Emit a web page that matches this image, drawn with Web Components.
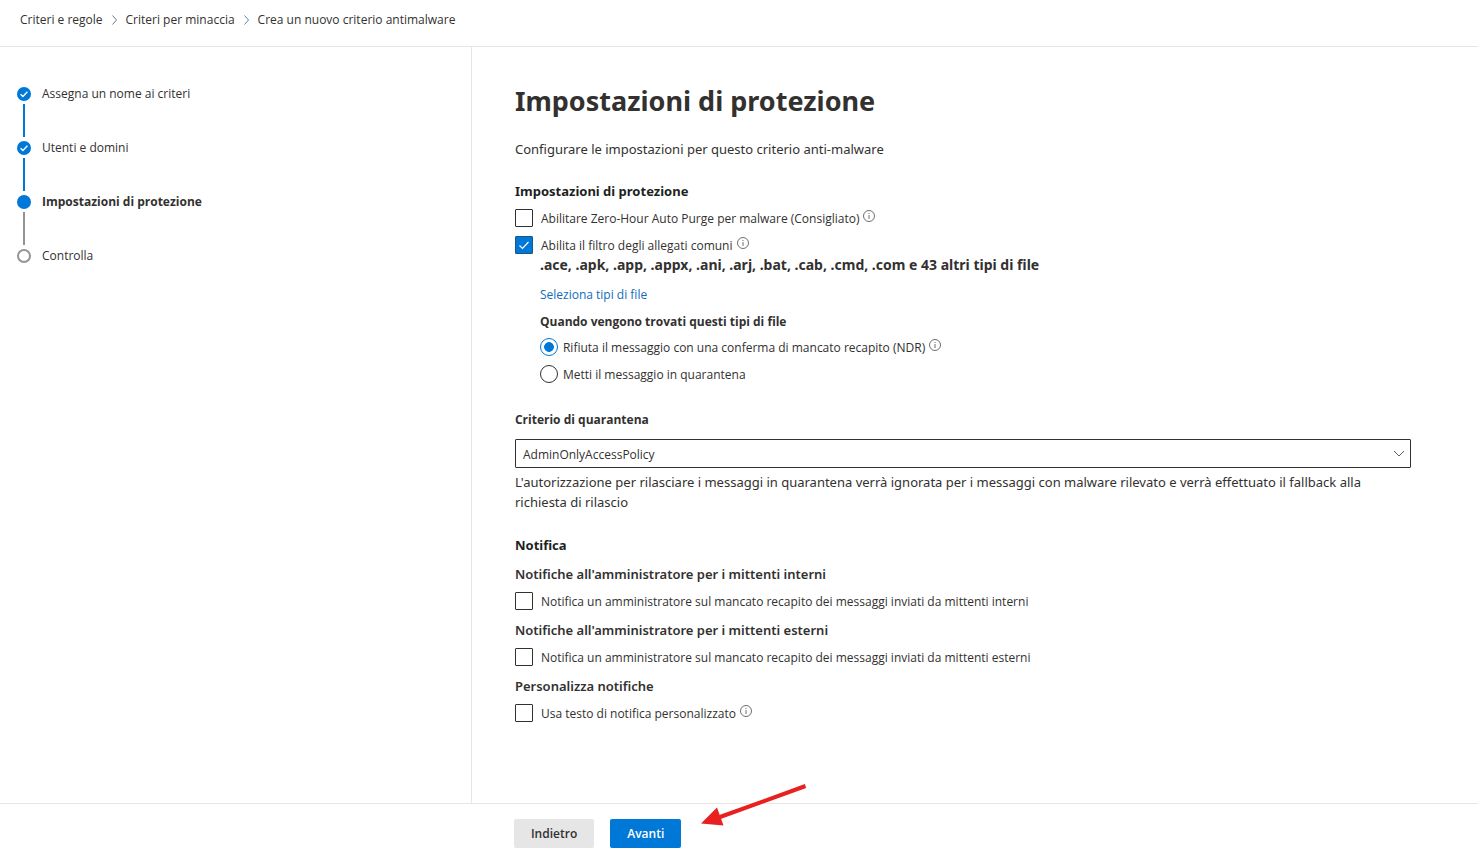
<!DOCTYPE html>
<html lang="it">
<head>
<meta charset="utf-8">
<meta name="viewport" content="width=device-width, initial-scale=1">
<title>Crea un nuovo criterio antimalware</title>
<style>
  body {
    margin: 0;
    background: #fff;
    color: #323130;
    font-family: "Segoe UI", "Open Sans", "Noto Sans", sans-serif;
    font-size: 12px;
    line-height: 20px;
    --accent: #0078d7;
    --line: #e6e6e6;
    --side: calc(32% - 1px);
    --text-m: 13px;
    --text-l: 14px;
    --wide: "Segoe UI", "Noto Sans", "Open Sans", sans-serif;
  }
</style>
</head>
<body>
<policy-wizard></policy-wizard>

<script>
  const define = (name, html, setup) => {
    const template = document.createElement('template');
    template.innerHTML = html;
    customElements.define(name, class extends HTMLElement {
      constructor() {
        super();
        this.attachShadow({ mode: 'open' }).append(template.content.cloneNode(true));
      }
      connectedCallback() {
        if (setup) setup(this, this.shadowRoot);
      }
    });
  };

  define('info-icon', `
    <style>
      :host { display: block; flex: none; width: 12px; height: 12px; }
      svg { display: block; }
    </style>
    <svg width="12" height="12" viewBox="0 0 12 12" fill="none" stroke="#605e5c" role="img" aria-label="Informazioni">
      <circle cx="6" cy="6" r="5.5" stroke-width=".9"/>
      <path d="M6 5v4M6 3v1" stroke-width=".9"/>
    </svg>`);

  define('crumb-trail', `
    <style>
      :host { display: block; padding: 10px 20px 16px; border-bottom: 1px solid var(--line); }
      ol { display: flex; gap: 9px; align-items: center; list-style: none; margin: 0; padding: 0; }
      li { display: flex; gap: 9px; align-items: center; white-space: nowrap; }
      a { color: inherit; text-decoration: none; }
      svg { display: block; }
    </style>
    <nav aria-label="Percorso">
      <ol>
        <li><a href="#regole">Criteri e regole</a>
          <svg width="5" height="10" viewBox="0 0 5 10" fill="none" stroke="#797775"><path d="M.5 .5L4.5 5L.5 9.5"/></svg></li>
        <li><a href="#minaccia">Criteri per minaccia</a>
          <svg width="5" height="10" viewBox="0 0 5 10" fill="none" stroke="#5b86b5"><path d="M.5 .5L4.5 5L.5 9.5"/></svg></li>
        <li aria-current="page">Crea un nuovo criterio antimalware</li>
      </ol>
    </nav>`);

  define('wizard-step', `
    <style>
      :host { display: grid; grid-template-columns: 14px 1fr; column-gap: 11px; height: 54px; }
      :host([state="todo"]) { height: 20px; }
      .rail { display: flex; flex-direction: column; align-items: center; gap: 3px; padding-top: 4px; }
      .dot { box-sizing: border-box; flex: none; width: 14px; height: 14px; border-radius: 50%; background: var(--accent); }
      .dot svg { display: none; }
      :host([state="done"]) .dot svg { display: block; }
      .text { padding-top: 1px; }
      .bar { width: 2px; height: 33px; flex: none; background: var(--accent); }
      :host([state="current"]) .bar { background: #979593; }
      :host([state="current"]) { font-weight: 700; }
      :host([state="todo"]) .dot { background: #fff; border: 2px solid #979593; }
      :host([state="todo"]) .bar { display: none; }
    </style>
    <div class="rail">
      <div class="dot"><svg width="14" height="14" viewBox="0 0 14 14" fill="none" stroke="#fff" stroke-width="1.4"><path d="M3.6 7.2L5.9 9.4L10.4 4.8"/></svg></div>
      <div class="bar"></div>
    </div>
    <div class="text"><slot></slot></div>`);

  define('step-list', `
    <style>
      :host { display: block; box-sizing: border-box; padding: 36px 17px; border-right: 1px solid var(--line); }
    </style>
    <nav aria-label="Passaggi"><slot></slot></nav>`);

  define('check-option', `
    <style>
      :host { display: flex; gap: 4px; height: 18px; align-items: center; }
      label { display: flex; gap: 8px; align-items: center; white-space: nowrap; }
      span { padding-top: 2px; }
      input { appearance: none; box-sizing: border-box; flex: none; width: 18px; height: 18px; margin: 0;
        border: 1px solid #323130; border-radius: 1px; background: #fff; }
      input:checked { border-color: #1b5687; background: var(--accent) url("data:image/svg+xml,%3Csvg xmlns='http://www.w3.org/2000/svg' viewBox='0 0 16 16' fill='none' stroke='white' stroke-width='1.2'%3E%3Cpath d='M3.5 8.5L6.5 11.5L12.5 5'/%3E%3C/svg%3E") center / 16px; }
      info-icon { display: none; margin-bottom: 4px; }
      :host([info]) info-icon { display: block; }
    </style>
    <label><input type="checkbox"><span><slot></slot></span></label><info-icon></info-icon>`,
    (host, root) => { root.querySelector('input').checked = host.hasAttribute('checked'); });

  define('reject-choice', `
    <style>
      :host { display: block; }
      fieldset { display: flex; flex-direction: column; gap: 9px; margin: 0; padding: 0; border: 0; }
      legend { padding: 0; margin-bottom: 6px; font-weight: 700; }
      .row { display: flex; gap: 4px; height: 18px; align-items: center; }
      label { display: flex; gap: 5px; align-items: center; white-space: nowrap; }
      span { padding-top: 2px; }
      input { appearance: none; box-sizing: border-box; flex: none; width: 18px; height: 18px; margin: 0;
        border: 1px solid #323130; border-radius: 50%; background: #fff; }
      input:checked { border-color: var(--accent); background: radial-gradient(circle, var(--accent) 4.5px, #fff 5.2px); }
      info-icon { margin-bottom: 4px; }
    </style>
    <fieldset>
      <legend>Quando vengono trovati questi tipi di file</legend>
      <div class="row"><label><input type="radio" name="azione" checked><span>Rifiuta il messaggio con una conferma di mancato recapito (NDR)</span></label><info-icon></info-icon></div>
      <div class="row"><label><input type="radio" name="azione"><span>Metti il messaggio in quarantena</span></label></div>
    </fieldset>`);

  define('quarantine-select', `
    <style>
      :host { display: block; }
      label { display: block; margin-bottom: 9px; font-weight: 700; }
      .field { display: grid; align-items: center; }
      select, svg { grid-area: 1 / 1; }
      select { appearance: none; box-sizing: border-box; width: 100%; height: 29px; margin: 0; padding: 2px 32px 0 7px;
        border: 1px solid #323130; border-radius: 1px; background: #fff; color: inherit; font: inherit; }
      svg { justify-self: end; margin-right: 6px; pointer-events: none; }
      p { margin: 4px 0 0; padding-right: 12px; font-family: var(--wide); font-size: var(--text-m); }
    </style>
    <label for="policy">Criterio di quarantena</label>
    <div class="field">
      <select id="policy" aria-describedby="hint"><option>AdminOnlyAccessPolicy</option></select>
      <svg width="12" height="7" viewBox="0 0 12 7" fill="none" stroke="#605e5c"><path d="M1 1L6 6L11 1"/></svg>
    </div>
    <p id="hint">L'autorizzazione per rilasciare i messaggi in quarantena verrà ignorata per i messaggi con malware rilevato e verrà effettuato il fallback alla richiesta di rilascio</p>`);

  define('protection-form', `
    <style>
      :host { display: block; padding: 34px 67px 60px 43px; }
      h1, h2, h3, p { margin: 0; font-family: var(--wide); font-size: var(--text-m); }
      h1 { font-size: 27px; line-height: 40px; font-weight: 700; }
      .intro { margin: 18px 0 22px; }
      h2 { font-weight: 700; color: #201f1e; margin-bottom: 8px; }
      h3 { font-weight: 600; margin: 10px 0 8px; }
      .stack { display: grid; gap: 9px; }
      .nested { padding: 1px 0 27px 25px; }
      .types { font-size: var(--text-l); font-weight: 700; }
      .pick { display: block; width: fit-content; margin: 10px 0 7px; color: #0f6cbd; text-decoration: none; }
      .notify { margin-top: 23px; }
      .notify h2 { margin-bottom: 9px; }
      .notify h2 + h3 { margin-top: 0; }
    </style>
    <h1>Impostazioni di protezione</h1>
    <p class="intro">Configurare le impostazioni per questo criterio anti-malware</p>
    <section>
      <h2>Impostazioni di protezione</h2>
      <div class="stack">
        <check-option info>Abilitare Zero-Hour Auto Purge per malware (Consigliato)</check-option>
        <check-option info checked>Abilita il filtro degli allegati comuni</check-option>
      </div>
      <div class="nested">
        <p class="types">.ace, .apk, .app, .appx, .ani, .arj, .bat, .cab, .cmd, .com e 43 altri tipi di file</p>
        <a class="pick" href="#tipi">Seleziona tipi di file</a>
        <reject-choice></reject-choice>
      </div>
    </section>
    <quarantine-select></quarantine-select>
    <section class="notify">
      <h2>Notifica</h2>
      <h3>Notifiche all'amministratore per i mittenti interni</h3>
      <check-option>Notifica un amministratore sul mancato recapito dei messaggi inviati da mittenti interni</check-option>
      <h3>Notifiche all'amministratore per i mittenti esterni</h3>
      <check-option>Notifica un amministratore sul mancato recapito dei messaggi inviati da mittenti esterni</check-option>
      <h3>Personalizza notifiche</h3>
      <check-option info>Usa testo di notifica personalizzato</check-option>
    </section>`);

  define('wizard-button', `
    <style>
      :host { display: block; }
      button { box-sizing: border-box; height: 29px; padding: 0 17px; border: 0; border-radius: 2px;
        background: #e6e6e6; color: #323130; font: inherit; font-weight: 600; white-space: nowrap; }
      :host([primary]) button { background: var(--accent); color: #fff; }
    </style>
    <button type="button"><slot></slot></button>`);

  define('wizard-footer', `
    <style>
      :host { display: flex; gap: 16px; padding: 15px 0 8px calc(var(--side) + 42px); border-top: 1px solid var(--line); }
      .marked { position: relative; }
      svg { position: absolute; left: 91px; top: -36px; pointer-events: none; }
    </style>
    <wizard-button>Indietro</wizard-button>
    <div class="marked">
      <wizard-button primary>Avanti</wizard-button>
      <svg width="106" height="44" viewBox="0 0 106 44" aria-hidden="true">
        <path d="M104.5 3L19 34" stroke="#e8201f" stroke-width="4" fill="none"/>
        <path d="M0 40.500L16 24.500L22.500 42.500Z" fill="#e8201f"/>
      </svg>
    </div>`);

  define('policy-wizard', `
    <style>
      :host { display: grid; grid-template-rows: auto 1fr auto; min-height: 100vh; }
      .body { display: grid; grid-template-columns: var(--side) 1fr; }
    </style>
    <crumb-trail></crumb-trail>
    <div class="body">
      <step-list>
        <wizard-step state="done">Assegna un nome ai criteri</wizard-step>
        <wizard-step state="done">Utenti e domini</wizard-step>
        <wizard-step state="current">Impostazioni di protezione</wizard-step>
        <wizard-step state="todo">Controlla</wizard-step>
      </step-list>
      <main><protection-form></protection-form></main>
    </div>
    <wizard-footer></wizard-footer>`);
</script>
</body>
</html>
